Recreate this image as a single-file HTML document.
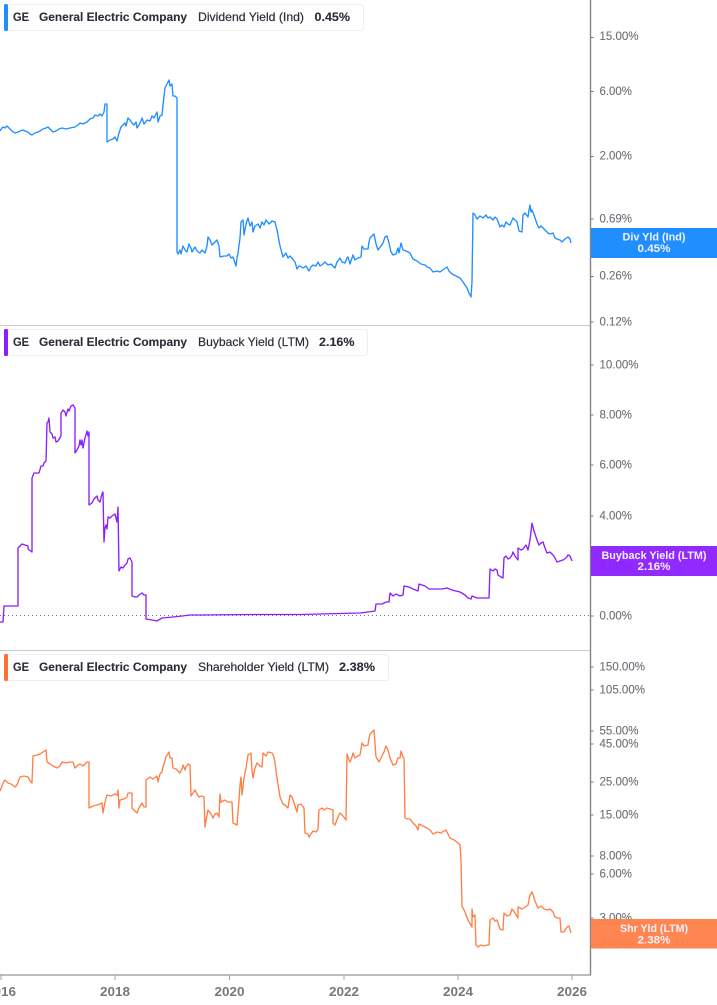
<!DOCTYPE html>
<html>
<head>
<meta charset="utf-8">
<style>
html,body{margin:0;padding:0;background:#fff;width:717px;height:1005px;overflow:hidden}
svg{display:block;font-family:"Liberation Sans",sans-serif}
.l{font-size:12px;fill:#6d7077;stroke:#6d7077;stroke-width:.12}
.lg{font-size:12px;fill:#2b2e38;stroke:#2b2e38;stroke-width:.2}
.b{font-weight:700;stroke-width:.1}
.x{font-size:13px;font-weight:700;fill:#77787c;text-anchor:middle}
.t{font-size:11px;font-weight:700;fill:#f4f0ff;text-anchor:middle}
.p{fill:none;stroke-width:1.35;stroke-linejoin:round}
</style>
</head>
<body>
<svg width="717" height="1005" viewBox="0 0 717 1005" xmlns="http://www.w3.org/2000/svg">
<rect width="717" height="1005" fill="#fff"/>

<path d="M0 325.5H590M0 650.5H590" stroke="#c9c9c9" stroke-width="1" fill="none"/>
<path d="M0 615.5H590" stroke="#777" stroke-width="1" stroke-dasharray="1 3" fill="none"/>

<polyline class="p" stroke="#1f8fff" points="0,131 2,128 3,127 5,128 7,126 9,128 12,131 15,133 18,132 20,131 23,130 25,131 28,132 30,134 32,135 35,133 38,132 40,131 43,129 46,128 48,127 50,129 53,132 56,131 59,129 62,128 66,129 70,128 75,127 78,125 80,123 83,124 87,122 90,119 93,118 95,115 98,116 100,114 102,116 104,112 105,104 107,104 107,142 110,140 113,139 115,137 117,141 119,133 121,127 123,125 125,123 126,126 128,118 130,120 132,123 134,125 136,122 137,128 139,125 141,121 142,118 144,124 147,120 150,121 152,116 154,118 157,112 158,122 160,116 162,115 163,105 165,88 167,84 169,80 170,86 172,84 173,96 175,96 177,98 177,252 178,254 180,250 181,254 183,246 185,250 187,252 189,244 191,248 192,252 195,247 197,251 200,253 202,250 205,253 207,246 208,237 210,240 212,245 215,242 217,240 219,246 220,257 224,256 227,256 229,254 231,258 233,257 236,266 237,258 238,253 240,238 241,222 243,220 244,235 246,224 248,218 250,226 252,222 253,232 255,226 258,224 260,228 262,222 264,225 266,220 269,224 272,221 275,222 277,230 280,246 283,257 286,253 288,258 290,256 292,258 295,262 297,269 299,266 300,266 303,268 306,266 309,271 311,267 313,265 316,266 318,262 320,266 323,264 325,262 328,265 331,264 335,268 337,262 340,258 342,262 345,263 347,258 348,257 350,264 352,258 353,255 355,260 358,258 361,257 362,246 364,249 368,249 369,242 370,238 372,236 374,234 376,244 378,250 381,246 383,243 385,237 387,236 389,243 391,252 393,255 396,254 398,248 399,253 401,243 403,250 406,251 410,253 413,259 417,261 421,264 425,265 427,267 430,268 433,272 437,271 440,272 444,269 447,267 449,271 452,274 456,276 460,278 463,282 467,288 469,293 471,297 472,282 473,213 475,215 477,219 480,216 483,218 486,215 488,218 490,217 493,220 495,217 497,219 500,227 502,225 504,227 506,222 508,224 510,225 513,218 515,220 517,222 519,231 522,232 523,215 525,213 528,217 529,210 530,205 531,212 532,210 535,218 537,224 539,228 541,226 543,228 546,231 548,233 550,234 553,233 555,238 557,239 560,240 562,242 565,239 568,237 570,239 571,243"/>

<polyline class="p" stroke="#8b1fff" points="0,622 3,622 4,606 18,606 18,548 20,546 22,544 25,545 28,546 28,549 32,552 32,478 34,473 39,473 41,466 43,466 44,463 46,461 47,423 48,422 49,418 50,432 52,434 53,438 55,437 56,442 58,441 61,436 61,413 63,410 65,412 66,416 68,409 69,411 71,406 73,405 75,408 75,453 77,450 79,446 80,440 81,445 82,440 83,448 85,438 87,431 88,436 89,432 89,505 92,503 94,499 95,498 97,496 98,500 100,502 102,494 103,492 104,542 105,528 106,525 107,529 108,517 110,518 112,516 115,514 116,518 117,522 118,507 119,571 121,567 123,568 125,565 127,563 128,559 130,558 132,562 132,596 135,597 137,597 139,595 142,593 144,595 146,595 146,619 152,620 157,621 162,618 173,617 182,616 190,615 200,615 250,614.5 300,614.5 340,613.5 360,613 375,611 376,604 382,604 386,602 389,602 390,593 393,596 396,594 400,596 403,595 404,586 409,587 413,589 418,591 419,584 425,586 429,589 433,589 438,589 442,589 447,588 452,590 456,591 460,592 465,595 468,598 471,599 472,596 477,598 483,598 489,598 490,569 493,571 495,569 497,570 498,575 501,577 503,578 504,558 506,556 508,559 510,558 512,555 513,552 515,556 518,560 518,548 521,550 523,549 526,545 528,550 530,540 532,523 534,531 537,540 539,545 541,543 543,542 545,548 547,553 550,552 553,555 555,558 557,562 560,561 563,560 566,558 568,555 570,556 572,561"/>

<polyline class="p" stroke="#ff7f47" points="0,791 2,786 4,781 5,780 8,783 11,784 15,787 17,785 20,777 24,776 28,777 30,781 32,783 33,756 37,755 40,754 43,752 46,750 47,762 50,764 53,766 57,768 60,766 62,762 66,763 70,762 73,762 75,768 78,765 80,764 83,766 85,764 87,762 89,762 89,808 93,806 97,805 100,804 102,803 103,813 105,802 107,795 111,796 115,794 117,795 118,790 119,808 120,800 124,799 127,797 128,793 132,793 132,808 135,811 137,813 139,808 142,803 144,807 146,807 146,780 150,777 153,779 157,776 158,782 160,774 162,772 163,767 166,757 169,752 170,758 172,758 173,768 176,769 178,771 180,773 182,769 183,765 185,770 186,767 188,764 190,765 191,796 193,793 195,790 197,794 199,797 202,796 204,797 205,827 207,815 208,810 211,814 213,818 215,814 217,813 219,817 220,794 221,802 225,800 228,802 232,802 233,823 235,824 237,825 239,800 240,785 241,777 242,795 244,778 246,768 248,755 251,753 252,770 253,778 255,768 257,763 260,766 262,767 263,753 266,756 268,752 272,753 274,757 275,763 277,778 280,797 283,804 285,805 288,808 290,795 292,797 294,803 297,812 298,805 301,804 304,808 305,833 308,834 309,837 311,834 313,831 316,832 318,829 319,810 322,808 324,810 327,808 330,809 333,810 333,823 335,825 338,817 340,813 343,816 346,820 347,754 349,760 350,762 352,757 353,753 355,758 358,756 360,755 362,743 364,746 368,745 369,738 370,734 372,732 374,730 376,757 379,762 381,758 384,752 386,746 388,750 390,758 393,765 396,764 398,758 400,758 401,751 403,757 404,758 405,818 408,819 410,819 413,823 416,826 418,830 419,824 423,826 427,828 430,830 433,834 437,832 441,833 444,831 446,830 448,834 450,838 454,840 458,843 460,845 461,860 462,906 465,912 468,920 472,927 472,909 473,917 475,915 476,945 478,947 481,945 484,946 487,945 489,945 490,920 493,918 495,921 497,920 500,929 503,930 504,913 507,916 510,915 512,909 515,913 518,918 518,907 522,909 525,907 528,905 530,895 532,892 535,901 538,908 541,906 544,909 548,910 550,909 553,912 555,917 557,918 560,918 561,932 564,932 567,927 569,926 571,933"/>

<rect x="4.5" y="4.500" width="359" height="26" rx="3" fill="#fff" stroke="#eeeeee"/>
<rect x="4" y="4" width="4" height="27" rx="1.500" fill="#1f8fff"/>
<text x="13" y="21" class="lg b" textLength="16" lengthAdjust="spacingAndGlyphs">GE</text>
<text x="39" y="21" class="lg b" textLength="148" lengthAdjust="spacingAndGlyphs">General Electric Company</text>
<text x="198" y="21" class="lg" textLength="106" lengthAdjust="spacingAndGlyphs">Dividend Yield (Ind)</text>
<text x="314.500" y="21" class="lg b" textLength="35.500" lengthAdjust="spacingAndGlyphs">0.45%</text>

<rect x="4.5" y="329.500" width="363" height="26" rx="3" fill="#fff" stroke="#eeeeee"/>
<rect x="4" y="329" width="4" height="27" rx="1.500" fill="#8b1fff"/>
<text x="13" y="346" class="lg b" textLength="16" lengthAdjust="spacingAndGlyphs">GE</text>
<text x="39" y="346" class="lg b" textLength="148" lengthAdjust="spacingAndGlyphs">General Electric Company</text>
<text x="198" y="346" class="lg" textLength="111" lengthAdjust="spacingAndGlyphs">Buyback Yield (LTM)</text>
<text x="319" y="346" class="lg b" textLength="35.500" lengthAdjust="spacingAndGlyphs">2.16%</text>

<rect x="4.5" y="654.500" width="384" height="26" rx="3" fill="#fff" stroke="#eeeeee"/>
<rect x="4" y="654" width="4" height="27" rx="1.500" fill="#ff7133"/>
<text x="13" y="671" class="lg b" textLength="16" lengthAdjust="spacingAndGlyphs">GE</text>
<text x="39" y="671" class="lg b" textLength="148" lengthAdjust="spacingAndGlyphs">General Electric Company</text>
<text x="198" y="671" class="lg" textLength="131" lengthAdjust="spacingAndGlyphs">Shareholder Yield (LTM)</text>
<text x="339" y="671" class="lg b" textLength="36" lengthAdjust="spacingAndGlyphs">2.38%</text>

<path d="M0 975H591" stroke="#a8a8a8" stroke-width="1.6" fill="none"/>
<path d="M590.500 0V975" stroke="#858585" stroke-width="1.4" fill="none"/>
<path d="M1 975v5M115 975v5M229.500 975v5M344 975v5M458 975v5M572 975v5" stroke="#a0a0a0" fill="none"/>
<path d="M591 37.500h2.500M591 91.500h2.500M591 156.500h2.500M591 219h2.500M591 276.500h2.500M591 322h2.500M591 365h2.500M591 415h2.500M591 465h2.500M591 516h2.500M591 566h2.500M591 616h2.500M591 667h2.500M591 690h2.500M591 731h2.500M591 744h2.500M591 782h2.500M591 815h2.500M591 856h2.500M591 874h2.500M591 918h2.500M591 945h2.500" stroke="#777" fill="none"/>

<g>
<text x="599.500" y="40" class="l" textLength="39" lengthAdjust="spacingAndGlyphs">15.00%</text>
<text x="599.500" y="95" class="l" textLength="32.500" lengthAdjust="spacingAndGlyphs">6.00%</text>
<text x="599.500" y="159.500" class="l" textLength="32.500" lengthAdjust="spacingAndGlyphs">2.00%</text>
<text x="599.500" y="222.500" class="l" textLength="32.500" lengthAdjust="spacingAndGlyphs">0.69%</text>
<text x="599.500" y="279.500" class="l" textLength="32.500" lengthAdjust="spacingAndGlyphs">0.26%</text>
<text x="599.500" y="325.500" class="l" textLength="32.500" lengthAdjust="spacingAndGlyphs">0.12%</text>
<text x="599.500" y="368.500" class="l" textLength="39" lengthAdjust="spacingAndGlyphs">10.00%</text>
<text x="599.500" y="418.500" class="l" textLength="32.500" lengthAdjust="spacingAndGlyphs">8.00%</text>
<text x="599.500" y="468.500" class="l" textLength="32.500" lengthAdjust="spacingAndGlyphs">6.00%</text>
<text x="599.500" y="519.500" class="l" textLength="32.500" lengthAdjust="spacingAndGlyphs">4.00%</text>
<text x="599.500" y="569.500" class="l" textLength="32.500" lengthAdjust="spacingAndGlyphs">2.00%</text>
<text x="599.500" y="619.500" class="l" textLength="32.500" lengthAdjust="spacingAndGlyphs">0.00%</text>
<text x="599.500" y="670.500" class="l" textLength="45.500" lengthAdjust="spacingAndGlyphs">150.00%</text>
<text x="599.500" y="693.500" class="l" textLength="45.500" lengthAdjust="spacingAndGlyphs">105.00%</text>
<text x="599.500" y="734.500" class="l" textLength="39" lengthAdjust="spacingAndGlyphs">55.00%</text>
<text x="599.500" y="747.500" class="l" textLength="39" lengthAdjust="spacingAndGlyphs">45.00%</text>
<text x="599.500" y="785.500" class="l" textLength="39" lengthAdjust="spacingAndGlyphs">25.00%</text>
<text x="599.500" y="818.500" class="l" textLength="39" lengthAdjust="spacingAndGlyphs">15.00%</text>
<text x="599.500" y="859.500" class="l" textLength="32.500" lengthAdjust="spacingAndGlyphs">8.00%</text>
<text x="599.500" y="877.500" class="l" textLength="32.500" lengthAdjust="spacingAndGlyphs">6.00%</text>
<text x="599.500" y="921.500" class="l" textLength="32.500" lengthAdjust="spacingAndGlyphs">3.00%</text>
<text x="599.500" y="948.500" class="l" textLength="32.500" lengthAdjust="spacingAndGlyphs">2.00%</text>
</g>

<rect x="591" y="228" width="126" height="30" fill="#1f8fff"/>
<text x="654" y="240.500" class="t" textLength="63" lengthAdjust="spacingAndGlyphs">Div Yld (Ind)</text>
<text x="654" y="252" class="t" textLength="33" lengthAdjust="spacingAndGlyphs">0.45%</text>

<rect x="591" y="546" width="126" height="30" fill="#8b1fff" fill-opacity=".95"/>
<text x="654" y="559" class="t" textLength="105" lengthAdjust="spacingAndGlyphs">Buyback Yield (LTM)</text>
<text x="654" y="570" class="t" textLength="33" lengthAdjust="spacingAndGlyphs">2.16%</text>

<rect x="591" y="919" width="126" height="29.500" fill="#ff7f47" fill-opacity=".95"/>
<text x="654" y="932" class="t" textLength="68" lengthAdjust="spacingAndGlyphs">Shr Yld (LTM)</text>
<text x="654" y="943.500" class="t" textLength="33" lengthAdjust="spacingAndGlyphs">2.38%</text>

<text x="1" y="996" class="x" textLength="30" lengthAdjust="spacingAndGlyphs">2016</text>
<text x="115" y="996" class="x" textLength="30" lengthAdjust="spacingAndGlyphs">2018</text>
<text x="229.500" y="996" class="x" textLength="30" lengthAdjust="spacingAndGlyphs">2020</text>
<text x="344" y="996" class="x" textLength="30" lengthAdjust="spacingAndGlyphs">2022</text>
<text x="458" y="996" class="x" textLength="30" lengthAdjust="spacingAndGlyphs">2024</text>
<text x="572" y="996" class="x" textLength="30" lengthAdjust="spacingAndGlyphs">2026</text>
</svg>
</body>
</html>
